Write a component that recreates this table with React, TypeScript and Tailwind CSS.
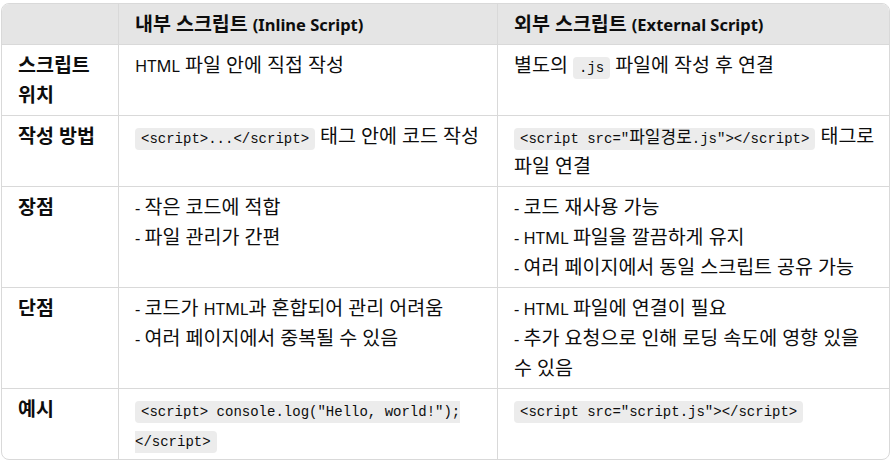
const code = "rounded-[4px] bg-[#ececec] px-[6px] py-[3px] font-['Liberation_Mono','Noto_Sans_CJK_KR',monospace] text-[14px] leading-none";

function Code({ children }: { children: React.ReactNode }) {
    return <code className={code}>{children}</code>;
}

// latin runs stay near 16px, hangul is set larger to match the wide korean face
function E({ children }: { children: React.ReactNode }) {
    return <span className="text-[16.5px] leading-none">{children}</span>;
}

const th = "border-b border-[#d9d9d9] bg-[#e5e5e5] px-4 py-[5px] text-left font-bold";
const td = "border-b border-[#d9d9d9] px-4 py-[5px] align-top";

export default function App() {
    return (
        <div className="h-[464px] w-[891px] bg-white pl-[1px] pt-[3px] font-['Noto_Sans','Noto_Sans_CJK_KR',sans-serif] text-[19.5px] leading-[30px] text-[#0d0d0d]">
            <div className="w-[889px] overflow-hidden rounded-lg border border-[#d9d9d9]">
                <table className="w-full table-fixed border-separate border-spacing-0">
                    <colgroup>
                        <col className="w-[117px]" />
                        <col className="w-[379px]" />
                        <col />
                    </colgroup>
                    <thead>
                        <tr>
                            <th className={th + " border-r"}></th>
                            <th className={th + " border-r"}>내부 스크립트 <E>(Inline Script)</E></th>
                            <th className={th}>외부 스크립트 <E>(External Script)</E></th>
                        </tr>
                    </thead>
                    <tbody>
                        <tr>
                            <td className={td + " border-r font-bold"}>스크립트<br />위치</td>
                            <td className={td + " border-r"}><E>HTML</E> 파일 안에 직접 작성</td>
                            <td className={td}>별도의 <Code>.js</Code> 파일에 작성 후 연결</td>
                        </tr>
                        <tr>
                            <td className={td + " border-r font-bold"}>작성 방법</td>
                            <td className={td + " border-r"}><Code>&lt;script&gt;...&lt;/script&gt;</Code> 태그 안에 코드 작성</td>
                            <td className={td}>
                                <span className="whitespace-nowrap"><Code>&lt;script src="<span className="text-[17px]">파일경로</span>.js"&gt;&lt;/script&gt;</Code> 태그로</span>
                                <br />파일 연결
                            </td>
                        </tr>
                        <tr>
                            <td className={td + " border-r font-bold"}>장점</td>
                            <td className={td + " border-r"}>
                                <E>- </E>작은 코드에 적합<br /><E>- </E>파일 관리가 간편
                            </td>
                            <td className={td}>
                                <E>- </E>코드 재사용 가능<br /><E>- HTML </E>파일을 깔끔하게 유지<br /><E>- </E>여러 페이지에서 동일 스크립트 공유 가능
                            </td>
                        </tr>
                        <tr>
                            <td className={td + " border-r font-bold"}>단점</td>
                            <td className={td + " border-r"}>
                                <E>- </E>코드가 <E>HTML</E>과 혼합되어 관리 어려움<br /><E>- </E>여러 페이지에서 중복될 수 있음
                            </td>
                            <td className={td}>
                                <E>- HTML </E>파일에 연결이 필요<br /><E>- </E>추가 요청으로 인해 로딩 속도에 영향 있을<br />수 있음
                            </td>
                        </tr>
                        <tr>
                            <td className="border-r border-[#d9d9d9] px-4 py-[5px] align-top font-bold">예시</td>
                            <td className="border-r border-[#d9d9d9] px-4 py-[5px] align-top">
                                <Code>&lt;script&gt; console.log("Hello, world!");<br />&lt;/script&gt;</Code>
                            </td>
                            <td className="px-4 py-[5px] align-top">
                                <Code>&lt;script src="script.js"&gt;&lt;/script&gt;</Code>
                            </td>
                        </tr>
                    </tbody>
                </table>
            </div>
        </div>
    );
}
